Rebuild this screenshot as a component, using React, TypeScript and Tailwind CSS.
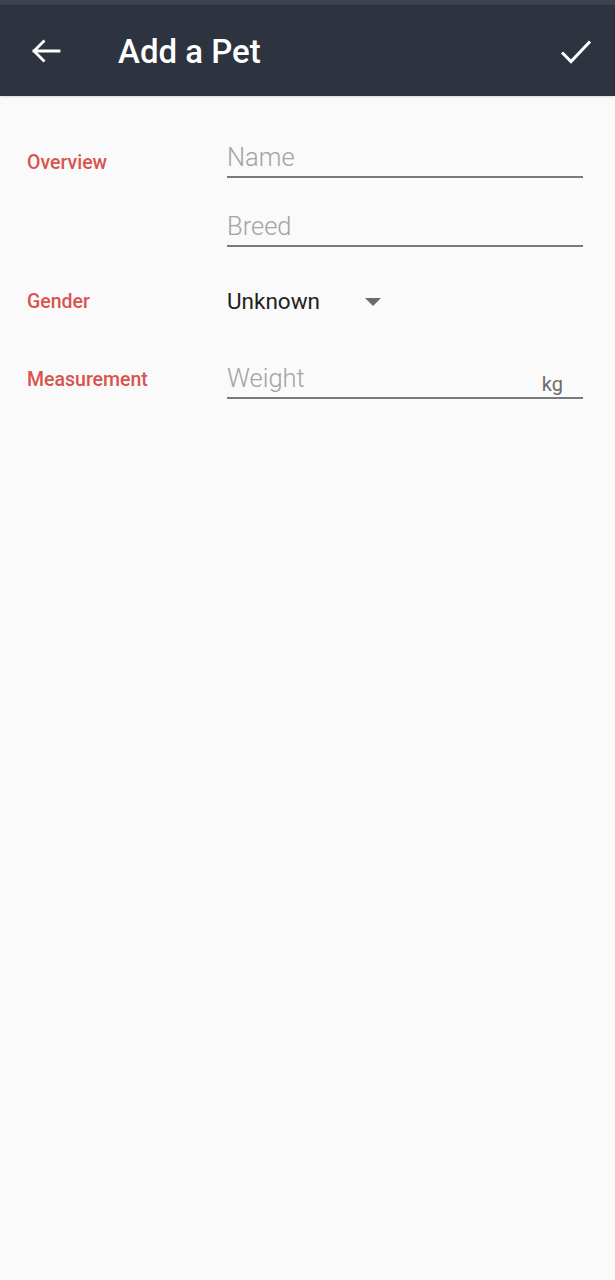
import React from "react";

const font = { fontFamily: "Roboto, 'Noto Sans', sans-serif" };

function Field({ placeholder, suffix }: { placeholder: string; suffix?: string }) {
  return (
    <div className="flex h-[44px] items-end border-b-2 border-[#7a7a7a]">
      <span className="flex-1 pb-[5px] text-[25.5px] leading-[28px] font-light text-[#a3a3a3]">
        {placeholder}
      </span>
      {suffix && (
        <span className="pb-[1px] pr-[20px] text-[20px] leading-[24px] text-[#6b6b6b]">{suffix}</span>
      )}
    </div>
  );
}

function Label({ children }: { children: React.ReactNode }) {
  return (
    <div className="w-[227px] shrink-0 pl-[27px] text-[19.5px] font-medium text-[#d9534f]">{children}</div>
  );
}

export default function App() {
  return (
    <div className="flex min-h-[1280px] flex-col bg-[#fafafa]" style={font}>
      <div className="h-[5px] bg-[#3b434d]" />
      <header className="flex h-[91px] items-center bg-[#2d3440] text-white shadow-sm">
        <svg width="30" height="24" viewBox="0 0 30 24" className="ml-[31px]" fill="none">
          <path d="M3 12H28M12.5 2.5L3 12l9.5 9.5" stroke="white" strokeWidth="2.8" strokeLinecap="square" />
        </svg>
        <h1 className="ml-[57px] flex-1 pt-[2px] text-[33px] font-medium">Add a Pet</h1>
        <svg width="34" height="26" viewBox="0 0 34 26" className="mr-[22px]" fill="none">
          <path d="M3 14.5l9 9L31 3.5" stroke="white" strokeWidth="3" />
        </svg>
      </header>

      <main className="flex flex-col pr-[32px] pt-[38px]">
        <div className="flex">
          <Label>
            <div className="pt-[14px]">Overview</div>
          </Label>
          <div className="flex flex-1 flex-col gap-[25px]">
            <Field placeholder="Name" />
            <Field placeholder="Breed" />
          </div>
        </div>

        <div className="mt-[38px] flex items-center">
          <Label>Gender</Label>
          <div className="flex items-center">
            <span className="text-[22.5px] text-[#212121]">Unknown</span>
            <svg width="16" height="8" viewBox="0 0 16 8" className="ml-[45px]">
              <path d="M0 0h16L8 8z" fill="#6b6b6b" />
            </svg>
          </div>
        </div>

        <div className="mt-[36px] flex items-center">
          <Label>
            <div className="pt-[5px]">Measurement</div>
          </Label>
          <div className="flex-1">
            <Field placeholder="Weight" suffix="kg" />
          </div>
        </div>
      </main>
    </div>
  );
}
